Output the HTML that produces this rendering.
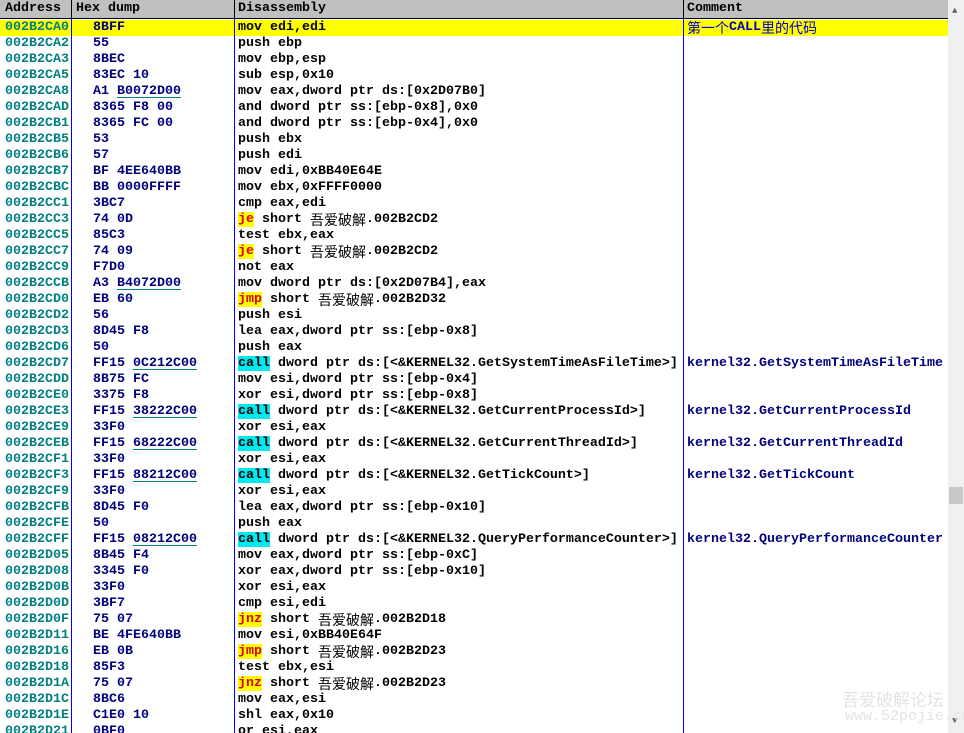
<!DOCTYPE html>
<html><head><meta charset="utf-8"><style>
html,body{margin:0;width:964px;height:733px;overflow:hidden}
body{background:#fff;position:relative;font-family:"Liberation Mono","Noto Sans CJK SC",monospace;font-size:13.33px;font-weight:bold}
.hd{position:absolute;top:0;left:0;width:948px;height:18px;background:#c0c0c0;border-bottom:1px solid #000}
.hd span{position:absolute;top:1px;line-height:16px;color:#000}
.v{position:absolute;top:19px;width:1px;height:714px;background:#0000ff}
.vh{position:absolute;top:0;width:1px;height:19px;background:#000}
.r{position:absolute;left:0;width:948px;height:16px;line-height:16px;white-space:pre}
.r>span{position:absolute;top:0;height:16px;line-height:16px}
.a{left:5px;color:#008080}
.h{left:93px;color:#000080}
.d{left:238px;color:#000}
.c{left:687px;color:#000080}
.u{text-decoration:underline;text-decoration-color:#008080;text-underline-offset:3px}
.cj{font-family:"Noto Sans CJK SC",sans-serif;font-weight:normal;font-size:14px;display:inline-block;height:16px;line-height:16px;vertical-align:top;overflow:visible}
.j{background:#ffff00;color:#e00000;font-style:normal}
.k{background:#00e8f0;color:#000;font-style:normal}
.sb{position:absolute;left:948px;top:0;width:16px;height:733px;background:#f0f0f0}
</style></head><body>
<div class="hd"><span style="left:5px">Address</span><span style="left:76px">Hex dump</span><span style="left:238px">Disassembly</span><span style="left:687px">Comment</span></div>
<div class="r" style="top:20px;background:#ffff00"></div>
<div id="rows"></div>
<div class="v" style="left:71px"></div><div class="v" style="left:234px"></div><div class="v" style="left:683px"></div>
<div class="vh" style="left:71px"></div><div class="vh" style="left:234px"></div><div class="vh" style="left:683px"></div>
<div class="sb"><div style="position:absolute;left:4px;top:6px;font-size:9px;color:#606060">&#9650;</div><div style="position:absolute;left:1px;top:487px;width:14px;height:17px;background:#c8c8c8"></div><div style="position:absolute;left:4px;top:716px;font-size:9px;color:#606060">&#9660;</div></div>
<div style="position:absolute;left:842px;top:686px;color:#e4e4e4;font-size:17px;font-family:'Noto Sans CJK SC',sans-serif;font-weight:normal">吾爱破解论坛</div>
<div style="position:absolute;left:845px;top:708px;color:#e4e4e4;font-size:15px;font-weight:normal">www.52pojie.cn</div>
<script>
var C="<span class=cj>吾爱破解</span>";
var R=[
["002B2CA0","8BFF","mov edi,edi","<span class=cj style='color:#0000c0'>第一个</span><b style='color:#0000c0'>CALL</b><span class=cj style='color:#0000c0'>里的代码</span>"],
["002B2CA2","55","push ebp"],["002B2CA3","8BEC","mov ebp,esp"],["002B2CA5","83EC 10","sub esp,0x10"],
["002B2CA8","A1 <u class=u>B0072D00</u>","mov eax,dword ptr ds:[0x2D07B0]"],
["002B2CAD","8365 F8 00","and dword ptr ss:[ebp-0x8],0x0"],["002B2CB1","8365 FC 00","and dword ptr ss:[ebp-0x4],0x0"],
["002B2CB5","53","push ebx"],["002B2CB6","57","push edi"],["002B2CB7","BF 4EE640BB","mov edi,0xBB40E64E"],
["002B2CBC","BB 0000FFFF","mov ebx,0xFFFF0000"],["002B2CC1","3BC7","cmp eax,edi"],
["002B2CC3","74 0D","<i class=j>je</i> short "+C+".002B2CD2"],
["002B2CC5","85C3","test ebx,eax"],
["002B2CC7","74 09","<i class=j>je</i> short "+C+".002B2CD2"],
["002B2CC9","F7D0","not eax"],["002B2CCB","A3 <u class=u>B4072D00</u>","mov dword ptr ds:[0x2D07B4],eax"],
["002B2CD0","EB 60","<i class=j>jmp</i> short "+C+".002B2D32"],
["002B2CD2","56","push esi"],["002B2CD3","8D45 F8","lea eax,dword ptr ss:[ebp-0x8]"],["002B2CD6","50","push eax"],
["002B2CD7","FF15 <u class=u>0C212C00</u>","<i class=k>call</i> dword ptr ds:[&lt;&amp;KERNEL32.GetSystemTimeAsFileTime&gt;]","kernel32.GetSystemTimeAsFileTime"],
["002B2CDD","8B75 FC","mov esi,dword ptr ss:[ebp-0x4]"],["002B2CE0","3375 F8","xor esi,dword ptr ss:[ebp-0x8]"],
["002B2CE3","FF15 <u class=u>38222C00</u>","<i class=k>call</i> dword ptr ds:[&lt;&amp;KERNEL32.GetCurrentProcessId&gt;]","kernel32.GetCurrentProcessId"],
["002B2CE9","33F0","xor esi,eax"],
["002B2CEB","FF15 <u class=u>68222C00</u>","<i class=k>call</i> dword ptr ds:[&lt;&amp;KERNEL32.GetCurrentThreadId&gt;]","kernel32.GetCurrentThreadId"],
["002B2CF1","33F0","xor esi,eax"],
["002B2CF3","FF15 <u class=u>88212C00</u>","<i class=k>call</i> dword ptr ds:[&lt;&amp;KERNEL32.GetTickCount&gt;]","kernel32.GetTickCount"],
["002B2CF9","33F0","xor esi,eax"],["002B2CFB","8D45 F0","lea eax,dword ptr ss:[ebp-0x10]"],["002B2CFE","50","push eax"],
["002B2CFF","FF15 <u class=u>08212C00</u>","<i class=k>call</i> dword ptr ds:[&lt;&amp;KERNEL32.QueryPerformanceCounter&gt;]","kernel32.QueryPerformanceCounter"],
["002B2D05","8B45 F4","mov eax,dword ptr ss:[ebp-0xC]"],["002B2D08","3345 F0","xor eax,dword ptr ss:[ebp-0x10]"],
["002B2D0B","33F0","xor esi,eax"],["002B2D0D","3BF7","cmp esi,edi"],
["002B2D0F","75 07","<i class=j>jnz</i> short "+C+".002B2D18"],
["002B2D11","BE 4FE640BB","mov esi,0xBB40E64F"],
["002B2D16","EB 0B","<i class=j>jmp</i> short "+C+".002B2D23"],
["002B2D18","85F3","test ebx,esi"],
["002B2D1A","75 07","<i class=j>jnz</i> short "+C+".002B2D23"],
["002B2D1C","8BC6","mov eax,esi"],["002B2D1E","C1E0 10","shl eax,0x10"],["002B2D21","0BF0","or esi,eax"]];
var h="";R.forEach(function(r,i){h+="<div class=r style='top:"+(20+16*i)+"px'><span class=a>"+r[0]+"</span><span class=h>"+r[1]+"</span><span class=d>"+r[2]+"</span>"+(r[3]?"<span class=c>"+r[3]+"</span>":"")+"</div>";});
document.getElementById("rows").innerHTML=h;
</script>
</body></html>
